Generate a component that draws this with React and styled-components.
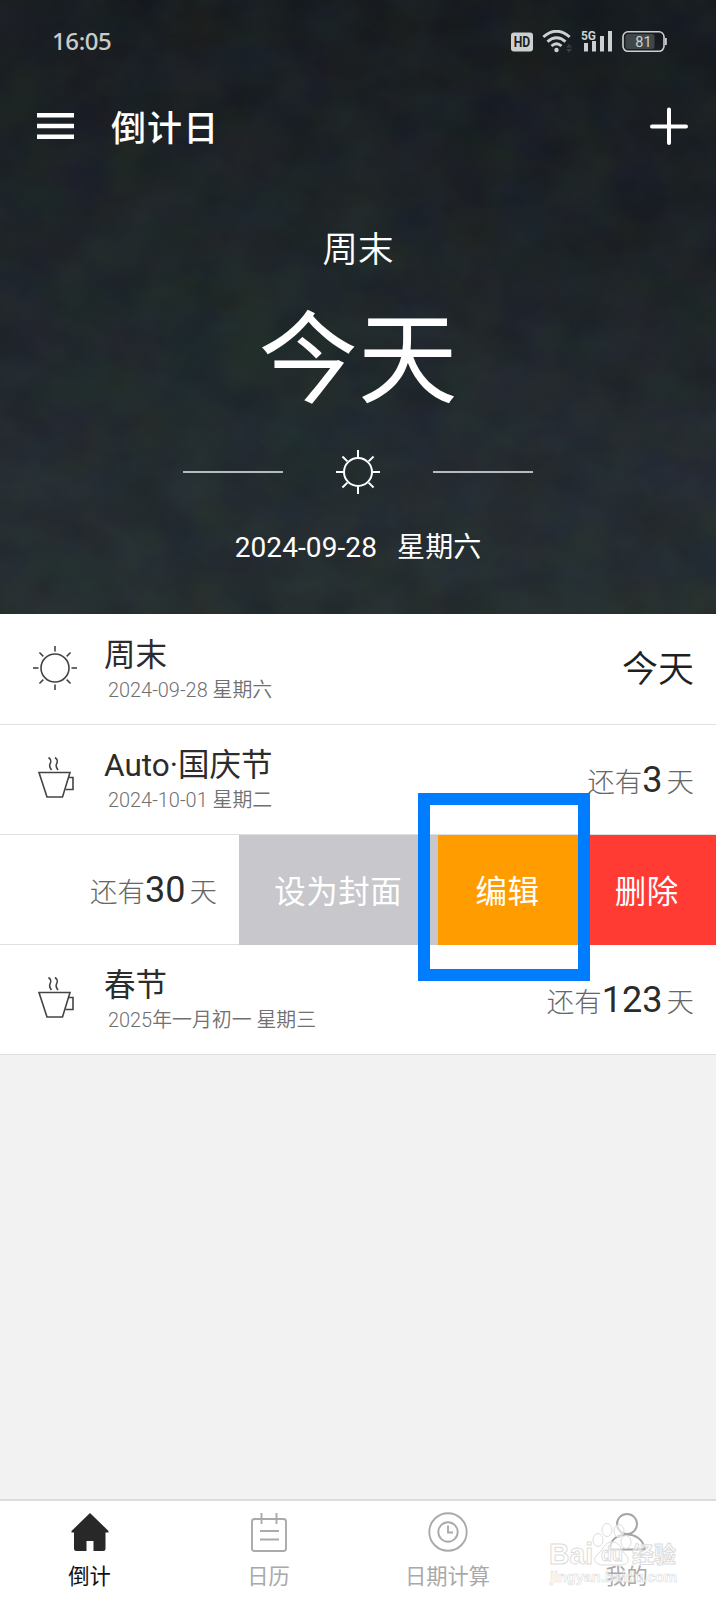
import styled, { createGlobalStyle } from "styled-components"

const GlobalStyle = createGlobalStyle`
    * {
        box-sizing: border-box;
    }

    body {
        margin: 0;
        background: #f2f2f2;
        font-family: Roboto, "Noto Sans CJK SC", sans-serif;
        white-space: nowrap;
    }

    svg {
        display: block;
        flex: none;
    }
`

const Page = styled.div`
    width: 716px;
    height: 1600px;
    display: flex;
    flex-direction: column;
    overflow: hidden;
    background: #f2f2f2;
`

const Hero = styled.header`
    position: relative;
    height: 614px;
    display: flex;
    flex-direction: column;
    color: #fff;
    background:
        radial-gradient(circle at 35% 58%, rgba(31, 46, 44, 0.6), transparent 40%),
        radial-gradient(circle at 100% 0%, rgba(20, 24, 29, 0.6), transparent 45%),
        linear-gradient(#171b1f, #1d2226 28%, #22282d 55%, #272e35 80%, #283132);
`

const Texture = styled.svg`
    position: absolute;
    inset: 0;
    opacity: 0.22;
`

const StatusBar = styled.div`
    position: relative;
    height: 83px;
    padding: 0 49px 0 52px;
    display: flex;
    align-items: center;
    justify-content: space-between;
`

const Clock = styled.div`
    margin-top: -2px;
    font: 500 24px/28px "Noto Sans", sans-serif;
    color: #c9cccd;
    letter-spacing: -0.4px;
`

const AppBar = styled.div`
    position: relative;
    height: 86px;
    padding: 0 28px 0 37px;
    display: flex;
    align-items: center;
`

const AppTitle = styled.h1`
    flex: 1;
    margin: 8px 0 0 37px;
    font-size: 35px;
    line-height: 50px;
    font-weight: 450;
    letter-spacing: 1.1px;
`

const Cover = styled.div`
    position: relative;
    display: flex;
    flex-direction: column;
    align-items: center;
`

const CoverName = styled.div`
    margin-top: 55px;
    font-size: 35.5px;
    line-height: 52px;
    font-weight: 350;
`

const CoverDays = styled.div`
    margin-top: 13px;
    font-size: 99.5px;
    line-height: 144px;
    font-weight: 400;
`

const Divider = styled.div`
    margin-top: 14px;
    width: 350px;
    height: 50px;
    display: flex;
    align-items: center;
    justify-content: space-between;
`

const Line = styled.div`
    width: 100px;
    height: 2px;
    background: #b3bcbf;
`

const CoverDate = styled.div`
    margin-top: 31px;
    font-size: 28px;
    line-height: 40px;
    display: flex;
    gap: 20px;

    & span {
        letter-spacing: 0.1px;
    }
`

const List = styled.div`
    position: relative;
    padding-top: 1px;
    background: #fff;
`

const Row = styled.div`
    height: 110px;
    display: flex;
    align-items: center;
    background: #fff;
    border-bottom: 1px solid #dfdfdf;
    padding: ${(p) => (p.$swiped ? "0" : "0 22px 0 33px")};

    & > svg {
        margin-bottom: ${(p) => (p.$raised ? "6px" : "3px")};
    }
`

const Info = styled.div`
    flex: 1;
    margin-left: 27px;
`

const Name = styled.div`
    font-size: 31.5px;
    line-height: 40px;
    color: #2c2c2c;
`

const Sub = styled.div`
    margin: 2px 0 0 4px;
    font-size: 19.9px;
    line-height: 26px;
    font-weight: 350;
    color: #707070;
`

const Today = styled.div`
    font-size: 36px;
    line-height: 50px;
    font-weight: 350;
    color: #1f1f1f;
`

const Remain = styled.div`
    width: ${(p) => (p.$swiped ? "239px" : "auto")};
    padding: ${(p) => (p.$swiped ? "4px 22px 0 0" : "4px 0 0")};
    display: flex;
    justify-content: flex-end;
    align-items: baseline;
    font-size: 27.5px;
    line-height: 40px;
    font-weight: 300;
    color: #666;

    & b {
        margin-right: 4px;
        font-size: 36px;
        font-weight: 400;
        color: #2b2b2b;
    }
`

const Action = styled.div`
    width: ${(p) => p.$width}px;
    height: 110px;
    padding-bottom: 2px;
    display: flex;
    align-items: center;
    justify-content: center;
    font-size: 31.5px;
    letter-spacing: 0.5px;
    color: #fff;
    background: ${(p) => p.$color};
`

const Highlight = styled.div`
    position: absolute;
    left: 418px;
    top: 179px;
    width: 172px;
    height: 188px;
    border: 12.5px solid #007dff;
`

const TabBar = styled.nav`
    position: relative;
    margin-top: auto;
    height: 101px;
    display: grid;
    grid-template-columns: repeat(4, 1fr);
    background: #fff;
    border-top: 2px solid #dcdcdc;
`

const Tab = styled.div`
    display: flex;
    flex-direction: column;
    align-items: center;
    padding-top: 11px;
    font-size: 21.3px;
    line-height: 30px;
    color: ${(p) => (p.$active ? "#111" : "#a9a9a9")};

    & svg {
        margin-bottom: 10px;
    }
`

const Watermark = styled.svg`
    position: absolute;
    left: 540px;
    top: 5px;
`

const Sun = ({ color, inner = 17, width = 1.8 }) => (
    <svg width="44" height="44" viewBox="-22 -22 44 44" fill="none" stroke={color} strokeWidth={width}>
        <circle r="14" />
        {[0, 45, 90, 135, 180, 225, 270, 315].map((a) => (
            <path key={a} d={`M0 ${-inner}V-22`} transform={`rotate(${a})`} />
        ))}
    </svg>
)

const Cup = () => (
    <svg width="44" height="44" viewBox="0 0 44 44" fill="none" stroke="#444" strokeWidth="1.6">
        <path d="M6 17.5H37L29.5 42H14Z" />
        <path d="M36 22.5H40V34.5H32.5" />
        <path d="M15.500 2.500C19 5 18 7 17 9S17 13 18.500 15M22 2.500C25.500 5 24.500 7 23.500 9S23.500 13 25 15" />
    </svg>
)

const StatusIcons = () => (
    <svg width="158" height="24" viewBox="0 0 158 24" fill="#cdd0d1">
        <rect x="2" y="2.500" width="22" height="19" rx="3" />
        <text x="13" y="17.200" fontSize="15" fontWeight="700" textAnchor="middle" textLength="16.500" lengthAdjust="spacingAndGlyphs" fill="#1b2022">
            HD
        </text>
        <g fill="none" stroke="#cdd0d1" strokeWidth="2.900">
            <path d="M34.300 7Q47.500 -4.500 60.700 7" />
            <path d="M38.500 11.700Q47.500 4 56.500 11.700" />
            <path d="M42.500 16Q47.500 11.500 52.500 16" />
        </g>
        <circle cx="47.500" cy="20" r="2.200" />
        <path d="M60 14l3 3.500h-6zM60 22.500l3 -3.500h-6z" fill="#3b4042" />
        <text x="72" y="10" fontSize="12" fontWeight="700" textLength="15" lengthAdjust="spacingAndGlyphs">
            5G
        </text>
        <path d="M75 13h4v8.500h-4zM83 11h4v10.500h-4zM91 6h4v15.500h-4zM99 1h4v20.500h-4z" />
        <rect x="114" y="1.800" width="41" height="19.500" rx="5" fill="none" stroke="#cdd0d1" strokeWidth="1.600" />
        <rect x="116.500" y="4" width="29" height="15" rx="2.500" fill="#414648" />
        <path d="M156 8h1.800v7H156z" />
        <text x="134.500" y="17" fontSize="14.500" textAnchor="middle">
            81
        </text>
    </svg>
)

const App = () => {
    return (
        <Page>
            <GlobalStyle />
            <Hero>
                <Texture width="716" height="614">
                    <filter id="grain" x="0" y="0" width="100%" height="100%" colorInterpolationFilters="sRGB">
                        <feTurbulence type="fractalNoise" baseFrequency="0.018 0.022" numOctaves="4" seed="4" />
                        <feColorMatrix values="0.2 0.1 0 0 -0.02  0.1 0.25 0 0 -0.02  0 0.1 0.25 0 -0.01  0 0 0 0 1" />
                    </filter>
                    <rect width="716" height="614" filter="url(#grain)" />
                </Texture>
                <StatusBar>
                    <Clock>16:05</Clock>
                    <StatusIcons />
                </StatusBar>
                <AppBar>
                    <svg width="37" height="26" viewBox="0 0 37 26" fill="#fff">
                        <path d="M0 0h37v4.500H0zM0 10.800h37v4.500H0zM0 21.500h37v4.500H0z" />
                    </svg>
                    <AppTitle>倒计日</AppTitle>
                    <svg width="38" height="38" viewBox="0 0 38 38" stroke="#fff" strokeWidth="4" strokeLinecap="round">
                        <path d="M2 19.500H36M19 2.500V36" />
                    </svg>
                </AppBar>
                <Cover>
                    <CoverName>周末</CoverName>
                    <CoverDays>今天</CoverDays>
                    <Divider>
                        <Line />
                        <Sun color="#fff" inner={15} width={2} />
                        <Line />
                    </Divider>
                    <CoverDate>
                        <span>2024-09-28</span>
                        <span>星期六</span>
                    </CoverDate>
                </Cover>
            </Hero>
            <List>
                <Row>
                    <Sun color="#444" inner={16.5} width={1.6} />
                    <Info>
                        <Name>周末</Name>
                        <Sub>2024-09-28 星期六</Sub>
                    </Info>
                    <Today>今天</Today>
                </Row>
                <Row $raised>
                    <Cup />
                    <Info>
                        <Name>Auto·国庆节</Name>
                        <Sub>2024-10-01 星期二</Sub>
                    </Info>
                    <Remain>
                        还有<b>3</b>天
                    </Remain>
                </Row>
                <Row $swiped>
                    <Remain $swiped>
                        还有<b>30</b>天
                    </Remain>
                    <Action $width={198.500} $color="#c7c7cc">设为封面</Action>
                    <Action $width={140} $color="#ff9d00">编辑</Action>
                    <Action $width={138.500} $color="#ff3b33">删除</Action>
                </Row>
                <Row $raised>
                    <Cup />
                    <Info>
                        <Name>春节</Name>
                        <Sub>2025年一月初一 星期三</Sub>
                    </Info>
                    <Remain>
                        还有<b>123</b>天
                    </Remain>
                </Row>
                <Highlight />
            </List>
            <TabBar>
                <Tab $active>
                    <svg width="40" height="40" viewBox="0 0 40 40" fill="#282828">
                        <path d="M20 1L38.500 19V20.500H35.500V36.500Q35.500 39 33 39H23.500V29H16.500V39H6.500Q4 39 4 36.500V20.500H1.500V19Z" />
                    </svg>
                    倒计
                </Tab>
                <Tab>
                    <svg width="40" height="40" viewBox="0 0 40 40" fill="none" stroke="#aaa" strokeWidth="1.900">
                        <rect x="3" y="7" width="34" height="32" rx="2.500" />
                        <path d="M12.500 1V12M27.500 1V12M11 19H30M11 27.500H30" />
                    </svg>
                    日历
                </Tab>
                <Tab>
                    <svg width="40" height="40" viewBox="0 0 40 40" fill="none" stroke="#aaa" strokeWidth="1.900">
                        <circle cx="20" cy="20" r="18.700" />
                        <circle cx="20" cy="20" r="9.700" />
                        <path d="M20 13.500V20.500H25" />
                    </svg>
                    日期计算
                </Tab>
                <Tab>
                    <svg width="40" height="40" viewBox="0 0 40 40" fill="none" stroke="#a4a4a4" strokeWidth="1.900">
                        <circle cx="20" cy="12" r="10" />
                        <path d="M2.500 37.500C4 26 12 22.500 20 22.500S36 27 38 37.500Z" />
                    </svg>
                    我的
                </Tab>
                <Watermark width="146" height="86" viewBox="0 0 146 86" fill="#fff" fillOpacity="0.6" stroke="#dcdcdc" strokeWidth="1">
                    <g fontFamily="Liberation Sans, sans-serif" fontWeight="700">
                        <text x="9" y="58" fontSize="29" textLength="44" lengthAdjust="spacingAndGlyphs">Bai</text>
                        <ellipse cx="58" cy="34" rx="5" ry="6.500" />
                        <ellipse cx="67" cy="24" rx="5" ry="6.500" />
                        <ellipse cx="79" cy="25" rx="5" ry="6.500" />
                        <ellipse cx="86" cy="36" rx="5" ry="6.500" />
                        <path d="M72 36C80 36 80 43 85 48S90 59 80 59H64C54 59 52 53 58 48S64 36 72 36Z" />
                        <text x="61" y="55" fontSize="21" textLength="22" lengthAdjust="spacingAndGlyphs">du</text>
                        <text x="92" y="56" fontSize="22" fontFamily="Noto Sans CJK SC, sans-serif">经验</text>
                        <text x="10" y="76" fontSize="15" strokeWidth="0.600" textLength="127" lengthAdjust="spacingAndGlyphs">jingyan.baidu.com</text>
                    </g>
                </Watermark>
            </TabBar>
        </Page>
    )
}

export default App
